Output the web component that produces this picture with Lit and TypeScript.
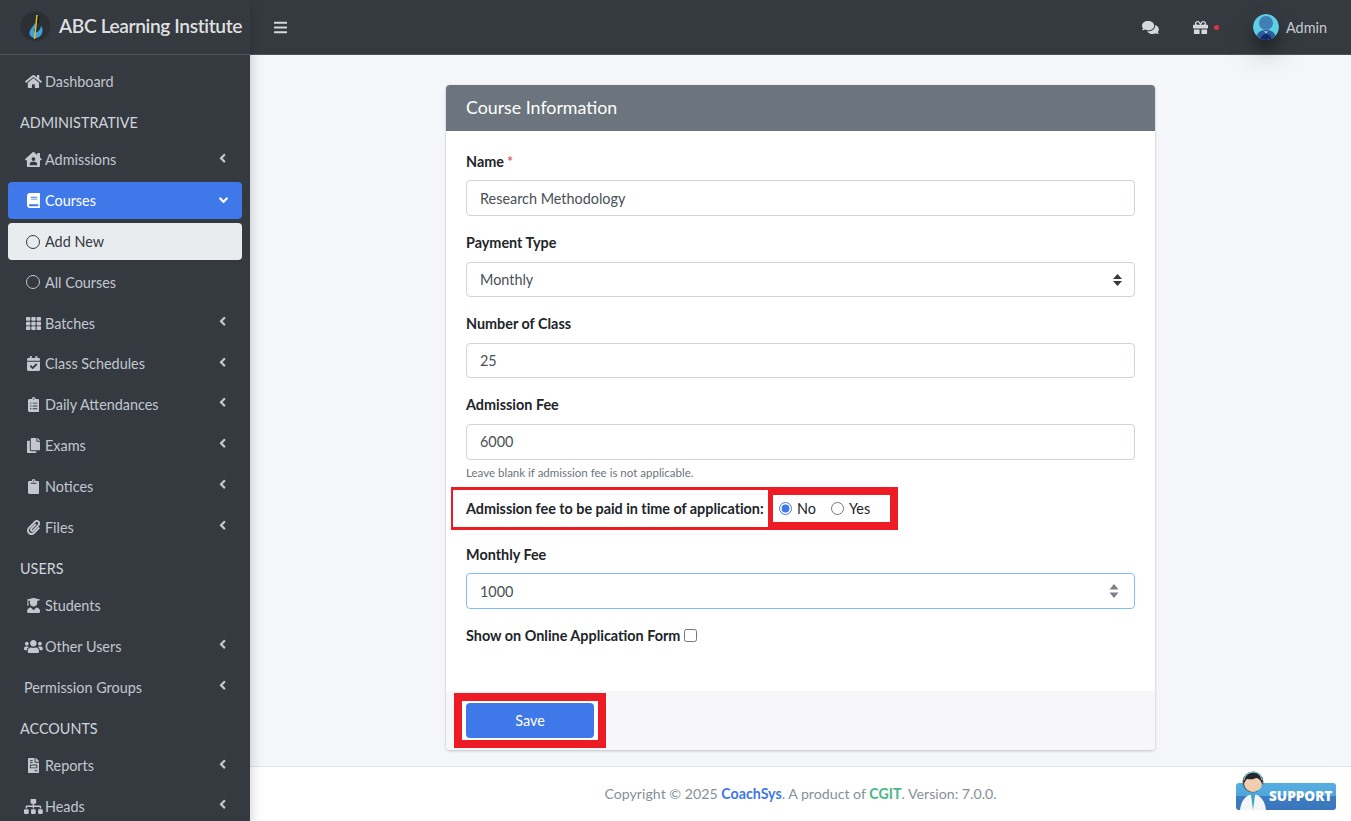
import { LitElement, html, css, svg } from "lit";
import { customElement } from "lit/decorators.js";

type Ico = { w: number; d: string };
const I: Record<string, Ico> = {
  home: { w: 576, d: "M280.37 148.26L96 300.11V464a16 16 0 0 0 16 16l112.06-.29a16 16 0 0 0 15.92-16V368a16 16 0 0 1 16-16h64a16 16 0 0 1 16 16v95.64a16 16 0 0 0 16 16.05L464 480a16 16 0 0 0 16-16V300L295.67 148.26a12.19 12.19 0 0 0-15.3 0zM571.6 251.47L488 182.56V44.05a12 12 0 0 0-12-12h-56a12 12 0 0 0-12 12v72.61L318.47 43a48 48 0 0 0-61 0L4.34 251.47a12 12 0 0 0-1.6 16.9l25.5 31A12 12 0 0 0 45.15 301l235.22-193.74a12.19 12.19 0 0 1 15.3 0L530.9 301a12 12 0 0 0 16.9-1.6l25.5-31a12 12 0 0 0-1.7-16.93z" },
  bars: { w: 448, d: "M16 132h416c8.837 0 16-7.163 16-16V76c0-8.837-7.163-16-16-16H16C7.163 60 0 67.163 0 76v40c0 8.837 7.163 16 16 16zm0 160h416c8.837 0 16-7.163 16-16v-40c0-8.837-7.163-16-16-16H16c-8.837 0-16 7.163-16 16v40c0 8.837 7.163 16 16 16zm0 160h416c8.837 0 16-7.163 16-16v-40c0-8.837-7.163-16-16-16H16c-8.837 0-16 7.163-16 16v40c0 8.837 7.163 16 16 16z" },
  left: { w: 256, d: "M31.7 239l136-136c9.4-9.4 24.6-9.4 33.9 0l22.6 22.6c9.4 9.4 9.4 24.6 0 33.9L127.9 256l96.4 96.4c9.4 9.4 9.4 24.6 0 33.9L201.7 409c-9.4 9.4-24.6 9.4-33.9 0l-136-136c-9.5-9.4-9.5-24.6-.1-34z" },
  down: { w: 320, d: "M143 352.3L7 216.3c-9.4-9.4-9.4-24.6 0-33.9l22.6-22.6c9.4-9.4 24.6-9.4 33.9 0l96.4 96.4 96.4-96.4c9.4-9.4 24.6-9.4 33.9 0l22.6 22.6c9.4 9.4 9.4 24.6 0 33.9l-136 136c-9.2 9.4-24.4 9.4-33.8 0z" },
  th: { w: 512, d: "M149.333 56v80c0 13.255-10.745 24-24 24H24c-13.255 0-24-10.745-24-24V56c0-13.255 10.745-24 24-24h101.333c13.255 0 24 10.745 24 24zm181.334 240v-80c0-13.255-10.745-24-24-24H205.333c-13.255 0-24 10.745-24 24v80c0 13.255 10.745 24 24 24h101.333c13.256 0 24.001-10.745 24.001-24zm32-240v80c0 13.255 10.745 24 24 24H488c13.255 0 24-10.745 24-24V56c0-13.255-10.745-24-24-24H386.667c-13.255 0-24 10.745-24 24zm-32 80V56c0-13.255-10.745-24-24-24H205.333c-13.255 0-24 10.745-24 24v80c0 13.255 10.745 24 24 24h101.333c13.256 0 24.001-10.745 24.001-24zm-205.334 56H24c-13.255 0-24 10.745-24 24v80c0 13.255 10.745 24 24 24h101.333c13.255 0 24-10.745 24-24v-80c0-13.255-10.745-24-24-24zM0 376v80c0 13.255 10.745 24 24 24h101.333c13.255 0 24-10.745 24-24v-80c0-13.255-10.745-24-24-24H24c-13.255 0-24 10.745-24 24zm386.667-56H488c13.255 0 24-10.745 24-24v-80c0-13.255-10.745-24-24-24H386.667c-13.255 0-24 10.745-24 24v80c0 13.255 10.745 24 24 24zm0 160H488c13.255 0 24-10.745 24-24v-80c0-13.255-10.745-24-24-24H386.667c-13.255 0-24 10.745-24 24v80c0 13.255 10.745 24 24 24zM181.333 376v80c0 13.255 10.745 24 24 24h101.333c13.255 0 24-10.745 24-24v-80c0-13.255-10.745-24-24-24H205.333c-13.255 0-24 10.745-24 24z" },
  clipboard: { w: 384, d: "M384 112v352c0 26.51-21.49 48-48 48H48c-26.51 0-48-21.49-48-48V112c0-26.51 21.49-48 48-48h80c0-35.29 28.71-64 64-64s64 28.71 64 64h80c26.51 0 48 21.49 48 48zM192 40c-13.255 0-24 10.745-24 24s10.745 24 24 24 24-10.745 24-24-10.745-24-24-24zm96 114v-20a6 6 0 0 0-6-6H102a6 6 0 0 0-6 6v20a6 6 0 0 0 6 6h180a6 6 0 0 0 6-6z" },
  copy: { w: 448, d: "M320 448v40c0 13.255-10.745 24-24 24H24c-13.255 0-24-10.745-24-24V120c0-13.255 10.745-24 24-24h72v296c0 30.879 25.121 56 56 56h168zm0-344V0H152c-13.255 0-24 10.745-24 24v368c0 13.255 10.745 24 24 24h272c13.255 0 24-10.745 24-24V128H344c-13.2 0-24-10.8-24-24zm120.971-31.029L375.029 7.029A24 24 0 0 0 358.059 0H352v96h96v-6.059a24 24 0 0 0-7.029-16.97z" },
  clip: { w: 448, d: "M43.246 466.142c-58.43-60.289-57.341-157.511 1.386-217.581L254.392 34c44.316-45.332 116.351-45.336 160.671 0 43.89 44.894 43.943 117.329 0 162.276L232.214 383.128c-29.855 30.537-78.633 30.111-107.982-.998-28.275-29.97-27.368-77.473 1.452-106.953l143.743-146.835c6.182-6.314 16.312-6.422 22.626-.241l22.861 22.379c6.315 6.182 6.422 16.312.241 22.626L171.427 319.927c-4.932 5.045-5.236 13.428-.648 18.292 4.372 4.634 11.245 4.711 15.688.165l182.849-186.851c19.613-20.062 19.613-52.725-.011-72.798-19.189-19.627-49.957-19.637-69.154 0L90.39 293.295c-34.763 35.56-35.299 93.12-1.191 128.313 34.01 35.093 88.985 35.137 123.058.286l172.06-175.999c6.177-6.319 16.307-6.433 22.626-.256l22.877 22.364c6.319 6.177 6.434 16.307.256 22.626l-172.06 175.998c-59.576 60.938-155.943 60.216-214.77-.485z" },
  comments: { w: 576, d: "M416 192c0-88.4-93.1-160-208-160S0 103.6 0 192c0 34.3 14.1 65.9 38 92-13.4 30.2-35.5 54.2-35.8 54.5-2.2 2.3-2.8 5.7-1.5 8.7S4.8 352 8 352c36.6 0 66.9-12.3 88.7-25 32.2 15.7 70.3 25 111.3 25 114.9 0 208-71.6 208-160zm122 220c23.9-26 38-57.7 38-92 0-66.9-53.5-124.2-129.3-148.1.9 6.6 1.3 13.3 1.3 20.1 0 105.9-107.7 192-240 192-10.8 0-21.3-.8-31.7-1.9C207.8 439.6 281.8 480 368 480c41 0 79.1-9.2 111.3-25 21.8 12.7 52.1 25 88.7 25 3.2 0 6.1-1.9 7.3-4.8 1.3-2.9.7-6.3-1.5-8.7-.3-.3-22.4-24.2-35.8-54.5z" },
  gift: { w: 512, d: "M32 448c0 17.7 14.3 32 32 32h160V320H32v128zm256 32h160c17.7 0 32-14.3 32-32V320H288v160zm192-320h-42.1c6.2-12.1 10.1-25.5 10.1-40 0-48.5-39.5-88-88-88-41.6 0-68.5 21.3-103 68.3-34.5-47-61.4-68.3-103-68.3-48.5 0-88 39.5-88 88 0 14.5 3.8 27.9 10.1 40H32c-17.7 0-32 14.3-32 32v80c0 8.8 7.2 16 16 16h480c8.8 0 16-7.2 16-16v-80c0-17.7-14.3-32-32-32zm-326.1 0c-22.1 0-40-17.9-40-40s17.9-40 40-40c19.9 0 34.6 3.3 86.1 80h-86.1zm206.1 0h-86.1c51.4-76.5 65.7-80 86.1-80 22.1 0 40 17.9 40 40s-17.9 40-40 40z" },
  users: { w: 640, d: "M96 224c35.3 0 64-28.7 64-64s-28.7-64-64-64-64 28.7-64 64 28.7 64 64 64zm448 0c35.3 0 64-28.7 64-64s-28.7-64-64-64-64 28.7-64 64 28.7 64 64 64zm32 32h-64c-17.6 0-33.5 7.1-45.1 18.6 40.3 22.1 68.9 62 75.1 109.4h66c17.7 0 32-14.3 32-32v-32c0-35.3-28.7-64-64-64zm-256 0c61.9 0 112-50.1 112-112S381.9 32 320 32 208 82.1 208 144s50.1 112 112 112zm76.8 32h-8.3c-20.8 10-43.9 16-68.5 16s-47.6-6-68.5-16h-8.3C179.6 288 128 339.6 128 403.2V432c0 26.5 21.5 48 48 48h288c26.5 0 48-21.5 48-48v-28.8c0-63.6-51.6-115.2-115.2-115.2zm-223.7-13.4C161.5 263.1 145.6 256 128 256H64c-35.3 0-64 28.7-64 64v32c0 17.7 14.3 32 32 32h65.9c6.3-47.4 34.9-87.3 75.2-109.4z" },
  sitemap: { w: 640, d: "M128 352H32c-17.67 0-32 14.33-32 32v96c0 17.67 14.33 32 32 32h96c17.67 0 32-14.33 32-32v-96c0-17.67-14.33-32-32-32zm-24-80h192v48h48v-48h192v48h48v-57.59c0-21.17-17.23-38.41-38.41-38.41H344v-64h40c17.67 0 32-14.33 32-32V32c0-17.67-14.33-32-32-32H256c-17.67 0-32 14.33-32 32v96c0 17.67 14.33 32 32 32h40v64H94.41C73.23 224 56 241.23 56 262.41V320h48v-48zm264 80h-96c-17.67 0-32 14.33-32 32v96c0 17.67 14.33 32 32 32h96c17.67 0 32-14.33 32-32v-96c0-17.67-14.33-32-32-32zm240 0h-96c-17.67 0-32 14.33-32 32v96c0 17.67 14.33 32 32 32h96c17.67 0 32-14.33 32-32v-96c0-17.67-14.33-32-32-32z" },
  book: { w: 448, d: "M448 360V24c0-13.3-10.7-24-24-24H96C43 0 0 43 0 96v320c0 53 43 96 96 96h328c13.3 0 24-10.7 24-24v-16c0-7.5-3.5-14.3-8.9-18.7-4.2-15.4-4.2-59.3 0-74.7 5.4-4.3 8.9-11.1 8.9-18.6zM128 134c0-3.3 2.7-6 6-6h212c3.3 0 6 2.7 6 6v20c0 3.3-2.7 6-6 6H134c-3.3 0-6-2.7-6-6v-20zm0 64c0-3.3 2.7-6 6-6h212c3.3 0 6 2.7 6 6v20c0 3.3-2.7 6-6 6H134c-3.3 0-6-2.7-6-6v-20zm253.4 250H96c-17.7 0-32-14.3-32-32 0-17.6 14.4-32 32-32h285.4c-1.9 17.1-1.9 46.9 0 64z" },
  cal: { w: 448, d: "M436 160H12c-6.627 0-12-5.373-12-12v-36c0-26.51 21.49-48 48-48h48V12c0-6.627 5.373-12 12-12h40c6.627 0 12 5.373 12 12v52h128V12c0-6.627 5.373-12 12-12h40c6.627 0 12 5.373 12 12v52h48c26.51 0 48 21.49 48 48v36c0 6.627-5.373 12-12 12zM12 192h424c6.627 0 12 5.373 12 12v260c0 26.51-21.49 48-48 48H48c-26.51 0-48-21.49-48-48V204c0-6.627 5.373-12 12-12zm333.296 95.947l-28.169-28.398c-4.667-4.705-12.265-4.736-16.97-.068L194.14 364.152l-45.95-46.323c-4.667-4.705-12.265-4.736-16.97-.068l-28.397 28.17c-4.705 4.667-4.736 12.265-.068 16.97l82.601 83.269c4.667 4.705 12.265 4.736 16.97.068l142.479-141.34c4.705-4.667 4.736-12.265.068-16.97z" },
  cliplist: { w: 384, d: "M336 64h-80c0-35.3-28.7-64-64-64s-64 28.7-64 64H48C21.5 64 0 85.5 0 112v352c0 26.5 21.5 48 48 48h288c26.5 0 48-21.5 48-48V112c0-26.5-21.5-48-48-48zM96 424c-13.3 0-24-10.7-24-24s10.7-24 24-24 24 10.7 24 24-10.7 24-24 24zm0-96c-13.3 0-24-10.7-24-24s10.7-24 24-24 24 10.7 24 24-10.7 24-24 24zm0-96c-13.3 0-24-10.7-24-24s10.7-24 24-24 24 10.7 24 24-10.7 24-24 24zm96-192c13.3 0 24 10.7 24 24s-10.7 24-24 24-24-10.7-24-24 10.7-24 24-24zm128 368c0 4.4-3.6 8-8 8H168c-4.4 0-8-3.6-8-8v-16c0-4.4 3.6-8 8-8h144c4.4 0 8 3.6 8 8v16zm0-96c0 4.4-3.6 8-8 8H168c-4.4 0-8-3.6-8-8v-16c0-4.4 3.6-8 8-8h144c4.4 0 8 3.6 8 8v16zm0-96c0 4.4-3.6 8-8 8H168c-4.4 0-8-3.6-8-8v-16c0-4.4 3.6-8 8-8h144c4.4 0 8 3.6 8 8v16z" },
  grad: { w: 448, d: "M319.4 320.6L224 416l-95.4-95.4C57.1 323.7 0 382.2 0 454.4v9.6c0 26.5 21.5 48 48 48h352c26.5 0 48-21.5 48-48v-9.6c0-72.2-57.1-130.7-128.6-133.8zM13.6 79.8l6.4 1.5v58.4c-7 4.2-12 11.5-12 20.3 0 8.4 4.6 15.4 11.1 19.7L3.5 242c-1.7 6.9 2.1 14 7.6 14h41.8c5.5 0 9.3-7.1 7.6-14l-15.6-62.3C51.4 175.4 56 168.4 56 160c0-8.8-5-16.1-12-20.3V87.1l66 15.9c-8.6 17.2-14 36.4-14 57 0 70.7 57.3 128 128 128s128-57.3 128-128c0-20.6-5.3-39.8-14-57l96.3-23.2c18.2-4.4 18.2-27.1 0-31.5l-190.4-46c-13-3.1-26.7-3.1-39.7 0L13.6 48.2c-18.1 4.4-18.1 27.2 0 31.6z" },
  house: { w: 576, d: "M570.69 236.27 512 184.45V48a16 16 0 0 0-16-16H432a16 16 0 0 0-16 16V99.67L314.78 10.3C308.5 4.61 296.53 0 288 0s-20.46 4.61-26.77 10.3l-256 226A18.27 18.27 0 0 0 0 248.2a18.64 18.64 0 0 0 4.09 10.71L25.5 282.7a21.14 21.14 0 0 0 12 5.3 21.67 21.67 0 0 0 10.69-4.11l15.9-14V480a32 32 0 0 0 32 32H480a32 32 0 0 0 32-32V269.88l15.91 14A21.82 21.82 0 0 0 538.63 288a20.89 20.89 0 0 0 11.87-5.31l21.41-23.81A21.64 21.64 0 0 0 576 248.19 21 21 0 0 0 570.69 236.27ZM288 176a64 64 0 1 1-64 64A64 64 0 0 1 288 176ZM400 448H176a16 16 0 0 1-16-16 96 96 0 0 1 96-96h64a96 96 0 0 1 96 96A16 16 0 0 1 400 448Z" },
  invoice: { w: 384, d: "M288 256H96v64h192v-64zm89-151L279.1 7c-4.5-4.5-10.6-7-17-7H256v128h128v-6.1c0-6.3-2.5-12.4-7-16.9zm-153 31V0H24C10.7 0 0 10.7 0 24v464c0 13.3 10.7 24 24 24h336c13.3 0 24-10.7 24-24V160H248c-13.2 0-24-10.8-24-24zM64 72c0-4.42 3.58-8 8-8h80c4.42 0 8 3.58 8 8v16c0 4.42-3.58 8-8 8H72c-4.42 0-8-3.58-8-8V72zm0 64c0-4.42 3.58-8 8-8h80c4.42 0 8 3.58 8 8v16c0 4.42-3.58 8-8 8H72c-4.42 0-8-3.58-8-8v-16zm256 304c0 4.42-3.58 8-8 8h-80c-4.42 0-8-3.58-8-8v-16c0-4.42 3.58-8 8-8h80c4.42 0 8 3.58 8 8v16zm0-200v96c0 8.84-7.16 16-16 16H80c-8.84 0-16-7.16-16-16v-96c0-8.84 7.16-16 16-16h224c8.84 0 16 7.16 16 16z" },
};

const fa = (name: string, cls = "") => {
  const i = I[name];
  return html`<svg class="fa ${cls}" viewBox="0 0 ${i.w} 512" fill="currentColor" aria-hidden="true">${svg`<path d=${i.d}></path>`}</svg>`;
};

type Item = { h?: string; t?: string; i?: string; sub?: boolean; arrow?: boolean; cls?: string };
const NAV: Item[] = [
  { t: "Dashboard", i: "home" },
  { h: "ADMINISTRATIVE" },
  { t: "Admissions", i: "house", arrow: true },
  { t: "Courses", i: "book", cls: "active" },
  { t: "Add New", sub: true, cls: "current" },
  { t: "All Courses", sub: true },
  { t: "Batches", i: "th", arrow: true },
  { t: "Class Schedules", i: "cal", arrow: true },
  { t: "Daily Attendances", i: "cliplist", arrow: true },
  { t: "Exams", i: "copy", arrow: true },
  { t: "Notices", i: "clipboard", arrow: true },
  { t: "Files", i: "clip", arrow: true },
  { h: "USERS" },
  { t: "Students", i: "grad" },
  { t: "Other Users", i: "users", arrow: true },
  { t: "Permission Groups", arrow: true },
  { h: "ACCOUNTS" },
  { t: "Reports", i: "invoice", arrow: true },
  { t: "Heads", i: "sitemap", arrow: true },
];

@customElement("app-root")
export class AppRoot extends LitElement {
  static styles = css`
    :host { display: block; height: 821px; overflow: hidden; font-family: Lato, "Liberation Sans", sans-serif; font-size: 14.4px; color: #212529; }
    * { box-sizing: border-box; }
    .fa { height: 1em; display: block; flex: none; }
    .wrap { display: grid; grid-template-columns: 250px 1fr; height: 821px; background: #f4f6f9; }

    .side { background: #343a40; color: #c2c7d0; height: 821px; overflow: hidden; position: relative; z-index: 3; box-shadow: 0 4px 12px rgba(0,0,0,.22); }
    .brand { height: 55px; border-bottom: 1px solid #4b545c; display: flex; align-items: center; padding-left: 20px; gap: 8px; }
    .brand svg { width: 31px; height: 31px; flex: none; margin-top: -2px; }
    .brand span { font-size: 19.2px; font-weight: 600; letter-spacing: -.4px; color: rgba(255,255,255,.85); white-space: nowrap; margin-top: -3px; }
    .menu { padding: 8px 8px 0; display: flex; flex-direction: column; }
    .hd { height: 37.8px; padding-left: 12px; display: flex; align-items: center; color: #d0d4db; flex: none; }
    .it { height: 36.8px; margin-bottom: 4px; flex: none; border-radius: 4px; padding: 0 16px; display: flex; align-items: center; position: relative; white-space: nowrap; }
    .ic { width: 18.75px; margin-right: 2.25px; display: flex; justify-content: center; font-size: 15px; }
    .ring { width: 14px; height: 14px; border: 1.8px solid currentColor; border-radius: 50%; }
    .ar { position: absolute; right: 16px; top: 9px; }
    .ar.d { right: 14px; top: 10.5px; }
    .active { background: #3f78e8; color: #fff; }
    .current { background: #e9ecef; color: #343a40; }

    .main { display: flex; flex-direction: column; min-width: 0; height: 821px; }
    .top { height: 55px; flex: none; background: #343a40; border-bottom: 1px solid #4b545c; color: #c2c7d0; display: flex; align-items: center; padding: 0 24px; position: relative; }
    .top .bars { font-size: 15px; color: #d5d8dc; }
    .top .sp { flex: 1; }
    .top .cm { font-size: 15px; color: #d5d8dc; margin-right: 34px; }
    .top .gf { font-size: 15px; color: #d5d8dc; }
    .dot { width: 5px; height: 5px; border-radius: 50%; background: #dc3545; margin-left: 6px; margin-right: 34px; }
    .av { width: 26px; height: 26px; flex: none; border-radius: 50%; margin-right: 7px; box-shadow: 0 14px 28px rgba(0,0,0,.25), 0 10px 10px rgba(0,0,0,.22); display: block; }
    .adm { color: #c8ccd3; }

    .content { flex: 1; min-height: 0; padding-top: 30px; display: flex; justify-content: center; align-items: flex-start; }
    .card { width: 709px; height: 665px; background: #fff; border-radius: 4px; box-shadow: 0 0 1px rgba(0,0,0,.125), 0 1px 3px rgba(0,0,0,.2); display: flex; flex-direction: column; overflow: hidden; }
    .chd { height: 46px; flex: none; background: #6c757d; color: #fff; font-size: 17.8px; padding: 0 20px 2px; display: flex; align-items: center; }
    .cbd { flex: 1; padding: 19.8px 20px 0; }
    .fg { margin-bottom: 16px; }
    label.l { display: block; font-weight: 700; height: 21.6px; line-height: 21.6px; margin-bottom: 8px; color: #212529; }
    .req { color: #dc3545; margin-left: 3px; font-weight: 400; }
    .ctl { display: flex; align-items: center; width: 100%; height: 35.6px; border: 1px solid #ced4da; border-radius: 4px; background: #fff; padding: 0 13px; font: 14.4px Lato, "Liberation Sans", sans-serif; color: #495057; outline: none; }
    select.ctl { appearance: none; }
    .selw, .numw { position: relative; }
    .selw svg, .numw svg { position: absolute; pointer-events: none; }
    .selw svg { right: 13px; top: 12px; width: 9px; height: 12px; }
    .numw svg { right: 16px; top: 11px; width: 10px; height: 14px; }
    .focus { border-color: #80bdff; }
    .hint { font-size: 11.52px; color: #6c757d; height: 18px; line-height: 18px; margin-top: 4.2px; }
    .anno { margin: 5.2px 0 13.8px -15px; width: 447px; height: 43px; background: #ed1c24; display: flex; align-items: flex-start; }
    .anno .a1 { margin: 3px 0 0 2px; width: 315px; height: 37px; background: #fff; padding-left: 13px; display: flex; align-items: center; font-weight: 700; white-space: nowrap; letter-spacing: -.03px; }
    .anno .a2 { margin: 8px 0 0 5px; width: 117px; height: 27px; background: #fff; display: flex; align-items: center; padding-left: 6px; color: #212529; }
    .anno input { margin: 0 5px 0 0; width: 13px; height: 13px; accent-color: #3f78e8; flex: none; }
    .anno .opt { margin-right: 15px; display: flex; align-items: center; margin-top: -.5px; }
    .chk { font-weight: 700; display: flex; align-items: center; height: 21.6px; }
    .chk input { margin: -1px 0 0 4px; width: 13px; height: 13px; }
    .cft { height: 59px; flex: none; background: #f7f7f9; padding: 2px 0 0 8px; }
    .savebox { width: 152px; height: 55px; background: #ed1c24; padding: 8px; }
    .savein { width: 136px; height: 39px; background: #fff; padding: 2px 4px; }
    .save { width: 128px; height: 35px; border: 0; border-radius: 4px; background: #3f78e8; color: #fff; font: 14.4px Lato, "Liberation Sans", sans-serif; padding: 0; }

    .ftr { height: 55px; flex: none; background: #fff; border-top: 1px solid #dee2e6; display: flex; align-items: center; justify-content: center; padding-bottom: 2px; color: #869099; font-size: 14.2px; position: relative; }
    .ftr b { font-weight: 700; }
    .ftr .c1 { color: #3f78e8; }
    .ftr .c2 { color: #48b884; }
    .sup { position: absolute; left: 985px; top: 0; width: 102px; height: 45px; display: block; }
    .suptxt { position: absolute; left: 1019px; top: 21px; color: #fff; font: 800 13.6px "Open Sans", "Liberation Sans", sans-serif; line-height: 16px; }
  `;

  private row(n: Item) {
    if (n.h) return html`<div class="hd">${n.h}</div>`;
    return html`<div class="it ${n.cls ?? ""}">
      ${n.sub
        ? html`<span class="ic"><span class="ring"></span></span>`
        : n.i
          ? html`<span class="ic">${fa(n.i)}</span>`
          : ""}
      <span>${n.t}</span>
      ${n.arrow ? html`<span class="ar">${fa("left")}</span>` : ""}
      ${n.cls === "active" ? html`<span class="ar d">${fa("down")}</span>` : ""}
    </div>`;
  }

  render() {
    return html`<div class="wrap">
      <aside class="side">
        <div class="brand">
          <svg viewBox="0 0 31 31">
            <circle cx="15.5" cy="15.5" r="15" fill="#2b3035"></circle>
            <path d="M15 12c-2 4-6 7-5.5 11 .6 3.5 6 5 9.5 3 4-2.3 4.5-8 2-11.5-.4 3-1.5 5.5-4 6.5-2.5.8-4-.7-2-4z" fill="#3f9fe0"></path>
            <path d="M18 5l-1 7" stroke="#14171a" stroke-width="3" fill="none"></path>
            <path d="M17 4 14.5 28" stroke="#d9c81e" stroke-width="1.5" fill="none"></path>
          </svg>
          <span>ABC Learning Institute</span>
        </div>
        <nav class="menu">${NAV.map((n) => this.row(n))}</nav>
      </aside>
      <div class="main">
        <header class="top">
          <span class="bars">${fa("bars")}</span>
          <span class="sp"></span>
          <span class="cm">${fa("comments")}</span>
          <span class="gf">${fa("gift")}</span>
          <span class="dot"></span>
          <svg class="av" viewBox="0 0 26 26">
            <circle cx="13" cy="13" r="13" fill="#5fcde4"></circle>
            <clipPath id="avc"><circle cx="13" cy="13" r="13"></circle></clipPath>
            <g clip-path="url(#avc)">
              <rect x="6" y="2" width="14" height="14" rx="7" fill="#3f7fb5"></rect>
              <path d="M3 26c0-7 4-10 10-10s10 3 10 10z" fill="#2c5e9e"></path>
              <path d="M13 20c-3 0-5 2-6 6h12c-1-4-3-6-6-6z" fill="#122a6b"></path>
              <path d="M11 17.5l2 1.5 2-1.5z" fill="#fff"></path>
            </g>
          </svg>
          <span class="adm">Admin</span>
        </header>
        <section class="content">
          <div class="card">
            <div class="chd">Course Information</div>
            <div class="cbd">
              <div class="fg"><label class="l">Name<span class="req">*</span></label>
                <input class="ctl" value="Research Methodology" /></div>
              <div class="fg"><label class="l">Payment Type</label>
                <div class="selw"><select class="ctl"><option>Monthly</option></select>
                  <svg viewBox="0 0 9 12"><path d="M4.5 0 9 5H0zM0 7h9l-4.5 5z" fill="#343a40"></path></svg></div></div>
              <div class="fg"><label class="l">Number of Class</label>
                <input class="ctl" value="25" /></div>
              <div><label class="l">Admission Fee</label>
                <input class="ctl" value="6000" />
                <div class="hint">Leave blank if admission fee is not applicable.</div></div>
              <div class="anno">
                <div class="a1">Admission fee to be paid in time of application:</div>
                <div class="a2">
                  <label class="opt"><input type="radio" name="p" checked />No</label>
                  <label class="opt"><input type="radio" name="p" />Yes</label>
                </div>
              </div>
              <div class="fg"><label class="l">Monthly Fee</label>
                <div class="numw"><input class="ctl focus" value="1000" />
                  <svg viewBox="0 0 10 14"><path d="M5 0l4.5 5.5H.5zM.5 8.5h9L5 14z" fill="#7b8088"></path></svg></div></div>
              <label class="chk">Show on Online Application Form<input type="checkbox" /></label>
            </div>
            <div class="cft">
              <div class="savebox"><div class="savein"><button class="save">Save</button></div></div>
            </div>
          </div>
        </section>
        <footer class="ftr">
          <span>Copyright © 2025 <b class="c1">CoachSys</b>. A product of <b class="c2">CGIT</b>. Version: 7.0.0.</span>
          <svg class="sup" viewBox="0 0 102 45">
            <defs><linearGradient id="sg" x1="0" y1="0" x2="0" y2="1">
              <stop offset="0" stop-color="#55ade0"></stop><stop offset=".5" stop-color="#4fa6dc"></stop>
              <stop offset=".5" stop-color="#3d7dc2"></stop><stop offset="1" stop-color="#3a75ba"></stop></linearGradient></defs>
            <rect x="1" y="16" width="100" height="27" rx="3" fill="url(#sg)"></rect>
            <path d="M5 43c1-9 5-13 9-15h8c4 2 8 6 9 15z" fill="#f2f6f7"></path>
            <path d="M16 28l2 15 2-15z" fill="#3aa6b8"></path>
            <circle cx="18" cy="15" r="10.5" fill="#4a5a62"></circle>
            <circle cx="18" cy="16" r="9" fill="#f3cdb0"></circle>
            <path d="M9 17C7 9 13 6 18 6c6 0 10 3 9 11-1-4-4-6-6-6-3 2-7 1-9 1-1 1-2 2-3 5z" fill="#26282b"></path>
            <path d="M9 13C10 7 14 5 19 5c4 0 7 3 8 8" fill="none" stroke="#8fd0e0" stroke-width="1.2"></path>
            <path d="M27 17c0 5-3 6-8 7" fill="none" stroke="#9fd8e6" stroke-width="1.2"></path>
          </svg>
          <span class="suptxt">SUPPORT</span>
        </footer>
      </div>
    </div>`;
  }
}
